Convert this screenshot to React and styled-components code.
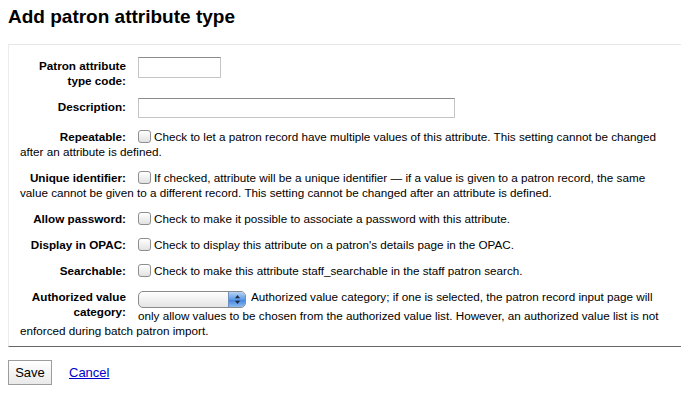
import React from "react";
import styled, { createGlobalStyle } from "styled-components";

const GlobalStyle = createGlobalStyle`
  html, body {
    margin: 0;
    padding: 0;
    background: #fff;
    overflow: hidden;
  }
  body {
    font-family: "Liberation Sans", Arial, sans-serif;
    font-size: 11.7px;
    color: #000;
  }
`;

const Page = styled.div`
  padding: 6px 8px;
`;

const Title = styled.h1`
  margin: 0;
  font-size: 19px;
  line-height: 22px;
  font-weight: bold;
`;

const Fieldset = styled.fieldset`
  margin: 16px 0 0;
  padding: 0;
  width: 700px;
  min-width: 0;
  box-sizing: border-box;
  border: 0;
  border-top: 1px solid #e6e6e6;
  border-left: 1px solid #ececec;
  border-bottom: 1px solid #666;
`;

const List = styled.ol`
  list-style: none;
  margin: 0;
  padding: 12px 41px 0 11px;
`;

const Row = styled.li`
  display: flow-root;
  line-height: 15px;
  padding-bottom: 11px;

  &:first-child {
    padding-bottom: 10px;
  }
  &:last-child {
    padding-bottom: 8px;
  }
`;

const Label = styled.label`
  float: left;
  width: 106px;
  margin-right: 12px;
  padding-top: ${(p) => p.$pt || 0}px;
  text-align: right;
  font-weight: bold;
`;

const TextInput = styled.input`
  width: ${(p) => p.$w}px;
  height: ${(p) => p.$h || 20}px;
  box-sizing: border-box;
  margin: 0;
  padding: 0 3px;
  border: 1px solid #c4c4c4;
  border-top-color: #8c8c8c;
  font: inherit;
  vertical-align: baseline;
`;

const Checkbox = styled.input`
  appearance: none;
  -webkit-appearance: none;
  width: 13px;
  height: 13px;
  margin: 0 3px 0 0;
  box-sizing: border-box;
  border: 1px solid #8e8e8e;
  border-radius: 3px;
  background: linear-gradient(#ffffff, #e2e2e2);
  box-shadow: inset 0 1px 0 #fff;
  vertical-align: -2px;
`;

const SelectBox = styled.span`
  display: inline-flex;
  justify-content: flex-end;
  width: 108px;
  height: 17px;
  box-sizing: border-box;
  margin-right: 5px;
  border: 1px solid #8a8a8a;
  border-radius: 5px;
  background: linear-gradient(#ffffff, #e4e4e4);
  vertical-align: -4px;
  overflow: hidden;
`;

const SelectArrow = styled.span`
  display: flex;
  align-items: center;
  justify-content: center;
  width: 16px;
  border-left: 1px solid #6d8fc4;
  background: linear-gradient(#b7d3f4, #5f9ae6 50%, #3f80dc 51%, #8cbcf0);
`;

const Actions = styled.div`
  display: flex;
  align-items: center;
  gap: 17px;
  padding-top: 13px;
`;

const Button = styled.button`
  width: 44px;
  height: 25px;
  padding: 0;
  border: 1px solid #9c9c9c;
  background: linear-gradient(#ffffff, #e9e9e9);
  font-family: "Liberation Sans", Arial, sans-serif;
  font-size: 13px;
  color: #000;
`;

const Link = styled.a`
  color: #0000cc;
  font-size: 13px;
  text-decoration: underline;
`;

function Arrows() {
  return (
    <svg width="7" height="11" viewBox="0 0 7 11">
      <path d="M3.5 1 L6 4.2 L1 4.2 Z" fill="#1c2a3d" />
      <path d="M3.5 10 L6 6.8 L1 6.8 Z" fill="#1c2a3d" />
    </svg>
  );
}

const checkRows = [
  {
    label: "Repeatable:",
    text: "Check to let a patron record have multiple values of this attribute. This setting cannot be changed after an attribute is defined.",
  },
  {
    label: "Unique identifier:",
    text: "If checked, attribute will be a unique identifier \u2014 if a value is given to a patron record, the same value cannot be given to a different record. This setting cannot be changed after an attribute is defined.",
  },
  {
    label: "Allow password:",
    text: "Check to make it possible to associate a password with this attribute.",
  },
  {
    label: "Display in OPAC:",
    text: "Check to display this attribute on a patron's details page in the OPAC.",
  },
  {
    label: "Searchable:",
    text: "Check to make this attribute staff_searchable in the staff patron search.",
  },
];

export default function App() {
  return (
    <Page>
      <GlobalStyle />
      <Title>Add patron attribute type</Title>
      <Fieldset>
        <List>
          <Row>
            <Label $pt={1}>
              Patron attribute
              <br />
              type code:
            </Label>
            <TextInput $w={83} $h={21} />
          </Row>
          <Row>
            <Label $pt={1}>Description:</Label>
            <TextInput $w={317} />
          </Row>
          {checkRows.map((r) => (
            <Row key={r.label}>
              <Label>{r.label}</Label>
              <Checkbox type="checkbox" />
              {r.text}
            </Row>
          ))}
          <Row>
            <Label>
              Authorized value
              <br />
              category:
            </Label>
            <SelectBox>
              <SelectArrow>
                <Arrows />
              </SelectArrow>
            </SelectBox>
            Authorized value category; if one is selected, the patron record
            input page will only allow values to be chosen from the authorized
            value list. However, an authorized value list is not enforced during
            batch patron import.
          </Row>
        </List>
      </Fieldset>
      <Actions>
        <Button>Save</Button>
        <Link href="#">Cancel</Link>
      </Actions>
    </Page>
  );
}
